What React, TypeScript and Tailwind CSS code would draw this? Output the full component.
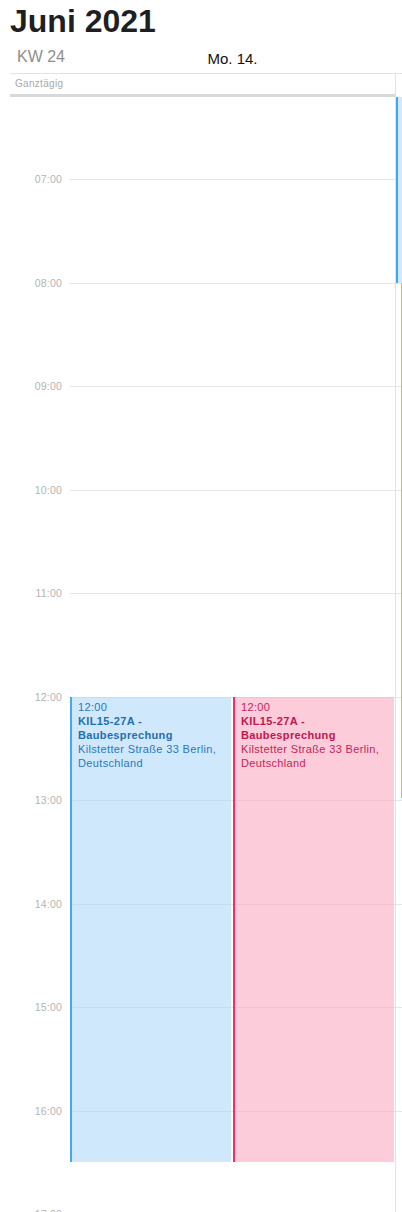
import React from "react";

const hours = ["06:00", "07:00", "08:00", "09:00", "10:00", "11:00", "12:00", "13:00", "14:00", "15:00", "16:00", "17:00"];

function EventBox({ left, color }: { left: string; color: "blue" | "pink" }) {
  const blue = color === "blue";
  return (
    <div
      className={
        "absolute top-[621px] h-[465.75px] w-[161px] border-l-2 pl-[6px] pr-[4px] pt-[3.5px] text-[11px] leading-[14px] tracking-[0.35px] " +
        left +
        " " +
        (blue
          ? "border-[#44a8f6] bg-[rgba(170,214,250,0.55)] text-[#2a78b6]"
          : "border-[#f32c6b] bg-[rgba(250,170,195,0.6)] text-[#c61f57]")
      }
    >
      <div>12:00</div>
      <div className={"font-bold " + (blue ? "text-[#1f6fae]" : "text-[#c0164f]")}>KIL15-27A - Baubesprechung</div>
      <div>Kilstetter Straße 33 Berlin, Deutschland</div>
    </div>
  );
}

export default function App() {
  return (
    <div className="relative h-[1212px] w-[402px] overflow-hidden bg-white font-['Liberation_Sans',Arial,sans-serif]">
      <div className="h-[40px] pl-[10px] pt-[3px] text-[32px] font-bold leading-[36px] text-[#1f1f1f]">Juni 2021</div>
      <div className="flex h-[33px]">
        <div className="w-[70px] pl-[17px] pt-[7px] text-[16px] leading-[20px] text-[#8e8e8e]">KW 24</div>
        <div className="w-[325px] pt-[9px] text-center text-[15px] leading-[20px] text-[#111111]">Mo. 14.</div>
      </div>
      <div className="ml-[10px] flex border-t border-[#e3e3e3]">
        <div className="h-[23px] w-[385px] border-b-[3px] border-[#d9d9d9] pl-[5px] pt-[3.5px] text-[10px] leading-[12px] tracking-[0.3px] text-[#a9a9a9]">
          Ganztägig
        </div>
        <div className="w-px bg-[#e3e3e3]" />
      </div>
      <div className="relative h-[1115px] overflow-hidden">
        <div className="mt-[-21.5px] flex">
          <div className="w-[70px] shrink-0">
            {hours.map((h, i) => (
              <div key={h} className="h-[103.5px] pr-[8px] text-right">
                {i > 0 && (
                  <div className="-translate-y-1/2 text-[10.5px] leading-[12px] tracking-[0.2px] text-[#b4b4b4]">{h}</div>
                )}
              </div>
            ))}
          </div>
          <div className="relative flex-1">
            {hours.map((h) => (
              <div key={h} className="h-[103.5px] border-t border-[#e6e6e6]" />
            ))}
            <div className="absolute bottom-0 left-[325px] top-0 w-px bg-[#e3e3e3]" />
            <EventBox left="left-0" color="blue" />
            <EventBox left="left-[163px]" color="pink" />
            <div className="absolute left-[326px] top-0 h-[207px] w-[6px] border-l-2 border-[#3ea8f4] bg-[#d3e8fc]" />
            <div className="absolute left-[331px] top-[207.5px] h-[515px] w-px bg-[#f2b632]" />
          </div>
        </div>
      </div>
    </div>
  );
}
